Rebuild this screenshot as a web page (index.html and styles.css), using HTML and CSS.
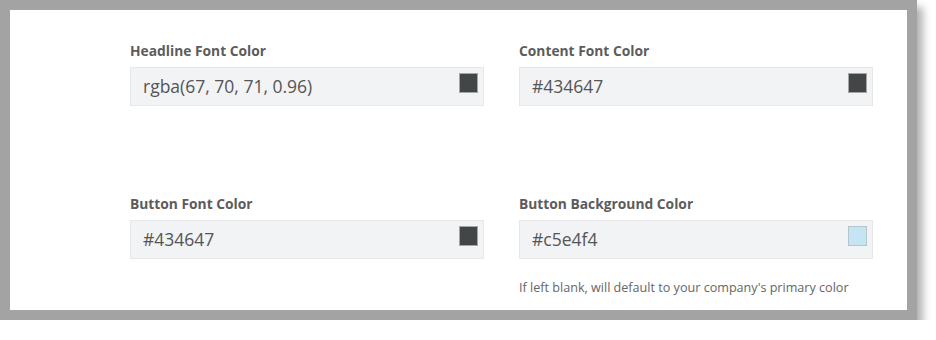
FILE: index.html
```html
<!DOCTYPE html>
<html lang="en">
<head>
    <meta charset="UTF-8">
    <title>Colors</title>
    <link rel="stylesheet" href="styles.css">
</head>
<body>
    <div class="frame">
        <div class="panel">
            <div class="field">
                <label>Headline Font Color</label>
                <div class="color-input">
                    <span class="value">rgba(67, 70, 71, 0.96)</span>
                    <span class="swatch swatch-dark"></span>
                </div>
            </div>
            <div class="field">
                <label>Content Font Color</label>
                <div class="color-input">
                    <span class="value">#434647</span>
                    <span class="swatch swatch-dark"></span>
                </div>
            </div>
            <div class="field">
                <label>Button Font Color</label>
                <div class="color-input">
                    <span class="value">#434647</span>
                    <span class="swatch swatch-dark"></span>
                </div>
            </div>
            <div class="field">
                <label>Button Background Color</label>
                <div class="color-input">
                    <span class="value">#c5e4f4</span>
                    <span class="swatch swatch-light"></span>
                </div>
                <p class="hint">If left blank, will default to your company's primary color</p>
            </div>
        </div>
    </div>
</body>
</html>
```

FILE: styles.css
```css
body {
    margin: 0;
    background-color: white;
    font-family: "Open Sans", Arial, sans-serif;
}
.frame {
    width: 897px;
    height: 300px;
    border: 10px solid #a3a3a3;
    background-color: white;
    box-shadow: 6px 7px 8px rgba(0, 0, 0, 0.3);
}
.panel {
    display: grid;
    grid-template-columns: 354px 354px;
    column-gap: 35px;
    row-gap: 89px;
    align-items: start;
    padding: 32px 0 0 120px;
}
.field label {
    display: block;
    font-size: 13.8px;
    line-height: 18px;
    font-weight: bold;
    color: #5c5c5c;
    margin-bottom: 7px;
}
.color-input {
    display: flex;
    justify-content: space-between;
    align-items: flex-start;
    height: 37px;
    background-color: #f2f3f5;
    border: 1px solid #e6e7e9;
    padding: 0 5px 0 12px;
}
.value {
    font-size: 17.5px;
    line-height: 37px;
    color: #555;
}
.swatch {
    width: 17px;
    height: 18px;
    margin-top: 5px;
    border: 1px solid #a5a5a5;
}
.swatch-dark {
    background-color: #434647;
}
.swatch-light {
    background-color: #c5e4f4;
    border-color: #b8c4cb;
}
.hint {
    margin: 21px 0 0 0;
    font-size: 12.6px;
    line-height: 16px;
    color: #666;
}
```
